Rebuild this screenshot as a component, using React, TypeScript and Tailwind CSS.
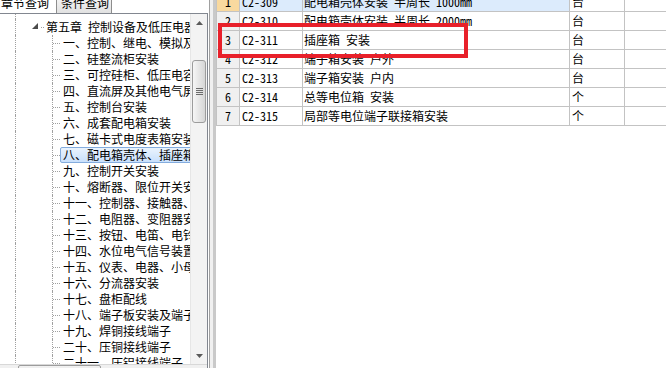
import React from 'react';

const FONT = "font-['Noto_Sans_Mono_CJK_SC','Noto_Sans_CJK_SC','Liberation_Mono',monospace]";

const treeItems = [
  '一、控制、继电、模拟及配电屏安装',
  '二、硅整流柜安装',
  '三、可控硅柜、低压电容器柜安装',
  '四、直流屏及其他电气屏(柜)安装',
  '五、控制台安装',
  '六、成套配电箱安装',
  '七、磁卡式电度表箱安装',
  '八、配电箱壳体、插座箱安装',
  '九、控制开关安装',
  '十、熔断器、限位开关安装',
  '十一、控制器、接触器、启动器安装',
  '十二、电阻器、变阻器安装',
  '十三、按钮、电笛、电铃安装',
  '十四、水位电气信号装置安装',
  '十五、仪表、电器、小母线安装',
  '十六、分流器安装',
  '十七、盘柜配线',
  '十八、端子板安装及端子板外部接线',
  '十九、焊铜接线端子',
  '二十、压铜接线端子',
  '二十一、压铝接线端子',
];

const rows = [
  { no: '1', code: 'C2-309', name: '配电箱壳体安装 半周长 1000mm', unit: '台' },
  { no: '2', code: 'C2-310', name: '配电箱壳体安装 半周长 2000mm', unit: '台' },
  { no: '3', code: 'C2-311', name: '插座箱 安装', unit: '台' },
  { no: '4', code: 'C2-312', name: '端子箱安装 户外', unit: '台' },
  { no: '5', code: 'C2-313', name: '端子箱安装 户内', unit: '台' },
  { no: '6', code: 'C2-314', name: '总等电位箱 安装', unit: '个' },
  { no: '7', code: 'C2-315', name: '局部等电位端子联接箱安装', unit: '个' },
];

const VLine = () => <div className="w-px shrink-0 border-l border-dotted border-[#a0a0a0]" />;

const TreeView = () => (
  <div className="flex flex-1 min-w-0 flex-col overflow-hidden">
    <div className="flex h-[5px] shrink-0">
      <div className="w-[15px] shrink-0" />
      <VLine />
    </div>
    {/* chapter node */}
    <div className="flex h-[16px] shrink-0">
      <div className="w-[15px] shrink-0" />
      <VLine />
      <div className="w-[16px] shrink-0" />
      <div className="flex w-[6px] shrink-0 items-center">
        <svg width="6" height="6" viewBox="0 0 6 6" className="-mt-[2px]">
          <polygon points="6,0 6,6 0,6" fill="#4b4b4b" />
        </svg>
      </div>
      <div className="w-[3px] shrink-0" />
      <div className="w-[3px] shrink-0 self-center border-t border-dotted border-[#a0a0a0]" />
      <div className="flex h-full items-center pl-[2px] whitespace-pre">第五章 控制设备及低压电器</div>
    </div>
    {treeItems.map((t, i) => {
      const sel = i === 7;
      return (
        <div key={i} className="flex h-[16px] shrink-0">
          <div className="w-[15px] shrink-0" />
          <VLine />
          <div className="w-[36px] shrink-0" />
          <VLine />
          <div className="w-[7px] shrink-0 self-center border-t border-dotted border-[#a0a0a0]" />
          <div
            className={
              sel
                ? 'flex h-full items-center whitespace-nowrap rounded-[2px] border border-[#84acdd] bg-gradient-to-b from-[#eaf3fd] to-[#c9e0fc] pl-[2px] pr-[4px]'
                : 'flex h-full items-center whitespace-nowrap border border-transparent pl-[2px] pr-[4px]'
            }
          >
            {t}
          </div>
        </div>
      );
    })}
  </div>
);

const VScroll = () => (
  <div className="flex w-[17px] shrink-0 flex-col bg-[#f3f3f3] border-l border-[#e6e6e6]">
    <div className="flex h-[17px] shrink-0 items-center justify-center pt-[1px]">
      <svg width="7" height="4" viewBox="0 0 7 4">
        <polygon points="3.5,0 7,4 0,4" fill="#5a5a5a" />
      </svg>
    </div>
    <div className="h-[29px] shrink-0" />
    <div className="mx-[1px] flex h-[63px] shrink-0 flex-col items-center justify-center gap-[1px] rounded-[3px] border border-[#9c9c9c] bg-gradient-to-r from-[#f6f6f6] to-[#d6d6d6]">
      <div className="h-px w-[7px] bg-[#6b6b6b]" />
      <div className="h-px w-[7px] bg-[#6b6b6b]" />
      <div className="h-px w-[7px] bg-[#6b6b6b]" />
      <div className="h-px w-[7px] bg-[#6b6b6b]" />
    </div>
    <div className="flex-1" />
    <div className="flex h-[17px] shrink-0 items-center justify-center">
      <svg width="7" height="4" viewBox="0 0 7 4">
        <polygon points="0,0 7,0 3.5,4" fill="#5a5a5a" />
      </svg>
    </div>
  </div>
);

export default function App() {
  return (
    <div className={`relative flex h-[368px] w-[666px] overflow-hidden bg-white text-[12px] leading-[12px] text-black ${FONT}`}>
      {/* left: query panel */}
      <div className="flex w-[208px] shrink-0 flex-col">
        <div className="flex h-[13px] shrink-0 overflow-hidden">
          <div className="w-[56px] shrink-0 bg-white pl-[1px] -mt-[3px]">章节查询</div>
          <div className="w-[56px] shrink-0 border-x border-[#8d8d8d] bg-gradient-to-b from-[#f2f2f2] to-[#e1e1e1] pl-[4px]">
            <div className="-mt-[3px]">条件查询</div>
          </div>
        </div>
        <div className="flex min-h-0 flex-1 flex-col border-t border-r border-[#828790]">
          <div className="flex h-[350px] shrink-0">
            <TreeView />
            <VScroll />
          </div>
          <div className="flex h-[17px] shrink-0 border-t border-[#d8d8d8] bg-[#f0f0f0]">
            <div className="w-[18px] shrink-0" />
            <div className="w-[83px] shrink-0 rounded-[2px] border border-[#9c9c9c] bg-gradient-to-b from-[#f2f2f2] to-[#d4d4d4]" />
          </div>
        </div>
      </div>

      {/* splitter */}
      <div className="flex w-[8px] shrink-0">
        <div className="w-px bg-white" />
        <div className="w-px bg-[#a0a0a0]" />
        <div className="w-[3px] bg-[#f0f0f0]" />
        <div className="w-[3px] bg-[#c9c9c9]" />
      </div>

      {/* right: item grid */}
      <div className="flex min-w-0 flex-1 flex-col -mt-[7px]">
        {rows.map((r, i) => {
          const sel = i === 0;
          return (
            <div key={r.no} className="flex h-[19px] shrink-0 border-b border-[#c3c3c3]">
              <div
                className={`flex w-[24px] shrink-0 items-center justify-center border-x border-[#c3c3c3] ${
                  sel ? 'bg-[#f9d99f]' : 'bg-[#f0f0f0]'
                }`}
              >
                {r.no}
              </div>
              <div className={`flex w-[63px] shrink-0 items-center border-r border-[#c3c3c3] pl-[2px] ${sel ? 'bg-[#dcebfc]' : ''}`}>
                {r.code}
              </div>
              <div className={`flex w-[267px] shrink-0 items-center whitespace-pre border-r border-[#c3c3c3] pl-[1px] ${sel ? 'bg-[#dcebfc]' : ''}`}>
                {r.name}
              </div>
              <div className="flex w-[55px] shrink-0 items-center border-r border-[#c3c3c3] pl-[2px]">{r.unit}</div>
              <div className="flex-1" />
            </div>
          );
        })}
      </div>

      {/* red annotation box */}
      <div className="pointer-events-none absolute left-[218px] top-[23px] h-[35px] w-[250px] border-[4px] border-[#e8202a]" />
    </div>
  );
}
